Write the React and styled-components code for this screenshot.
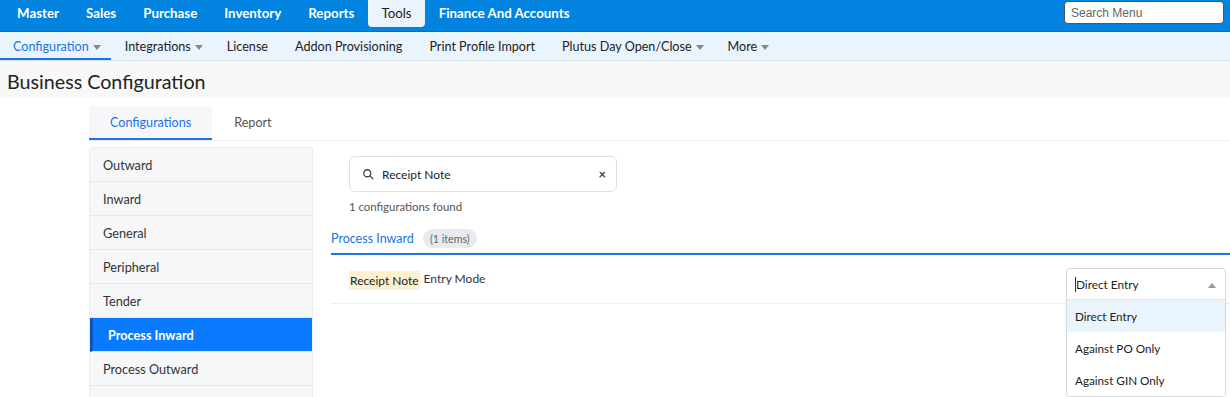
import React from "react";
import styled, { createGlobalStyle } from "styled-components";

const GlobalStyle = createGlobalStyle`
  body {
    margin: 0;
    font-family: Lato, "Open Sans", sans-serif;
    background: #fff;
    color: #333;
  }
`;

const TopBar = styled.div`
  display: flex;
  align-items: flex-start;
  height: 31px;
  background: #0283e0;
  padding-left: 3.5px;
  border-bottom: 1px solid #0b6fc4;
`;

const TopItem = styled.div`
  font-size: 13.3px;
  height: 27px;
  line-height: 26px;
  padding: 0 13.5px;
  color: ${(p) => (p.active ? "#222" : "#fff")};
  background: ${(p) => (p.active ? "#eaf4fd" : "transparent")};
  border-radius: 0 0 4px 4px;
  font-weight: ${(p) => (p.active ? 400 : 700)};
`;

const SearchMenu = styled.input`
  margin-left: auto;
  margin-right: 6px;
  margin-top: 1px;
  width: 160px;
  height: 23px;
  box-sizing: border-box;
  border: 1px solid #555;
  border-radius: 4px;
  padding: 0 6px;
  font-family: "Liberation Sans", Arial, sans-serif;
  font-size: 12px;
  color: #333;
  &::placeholder {
    color: #666;
  }
`;

const SubNav = styled.div`
  display: flex;
  height: 28px;
  background: #eaf4fd;
  border-bottom: 1px solid #d6e2ec;
`;

const SubItem = styled.div`
  display: flex;
  align-items: center;
  gap: 4px;
  font-size: 12.6px;
  padding: 2px 13.5px 0 13.5px;
  color: ${(p) => (p.active ? "#1a73e8" : "#222")};
  border-bottom: 2px solid ${(p) => (p.active ? "#1a73e8" : "transparent")};
  &:first-child {
    padding-left: 13px;
  }
`;

const Caret = styled.span`
  width: 0;
  height: 0;
  border-left: 4.5px solid transparent;
  border-right: 4.5px solid transparent;
  border-top: 5px solid ${(p) => (p.up ? "#999" : "#888")};
  margin-top: 2px;
  margin-right: ${(p) => (p.up ? "0" : "-3px")};
  transform: ${(p) => (p.up ? "rotate(180deg)" : "none")};
`;

const Header = styled.div`
  background: #f8f8f8;
  height: 37px;
  padding: 3px 0 0 7px;
  box-sizing: border-box;
  display: flex;
  align-items: center;
  font-size: 19.7px;
  color: #222;
`;

const Body = styled.div`
  padding-left: 89px;
  padding-top: 8px;
`;

const Tabs = styled.div`
  display: flex;
  border-bottom: 1px solid #eee;
  height: 35px;
  box-sizing: border-box;
`;

const Tab = styled.div`
  display: flex;
  align-items: center;
  padding: 0 21px;
  font-size: 12.6px;
  color: ${(p) => (p.active ? "#1a73e8" : "#555")};
  background: ${(p) => (p.active ? "#f5f7f9" : "transparent")};
  border-bottom: 2px solid ${(p) => (p.active ? "#1a73e8" : "transparent")};
  &:last-child {
    padding-left: 22px;
  }
`;

const Split = styled.div`
  display: flex;
  margin-top: 6px;
`;

const Side = styled.div`
  width: 222px;
  background: #f6f7f9;
  border: 1px solid #ececec;
  border-bottom: none;
  border-radius: 6px 0 0 0;
  flex-shrink: 0;
`;

const SideItem = styled.div`
  height: 33px;
  display: flex;
  align-items: center;
  padding-left: ${(p) => (p.active ? "15px" : "13px")};
  font-size: 12.7px;
  font-weight: ${(p) => (p.active ? 700 : 400)};
  color: ${(p) => (p.active ? "#fff" : "#333")};
  background: ${(p) => (p.active ? "#0a7aff" : "transparent")};
  border-left: ${(p) => (p.active ? "3px solid #0656c4" : "none")};
  border-bottom: 1px solid #e8e8e8;
`;

const Main = styled.div`
  flex: 1;
  padding-left: 18px;
`;

const SearchBox = styled.div`
  margin: 9px 0 0 18px;
  width: 268px;
  height: 36px;
  box-sizing: border-box;
  border: 1px solid #dcdfe3;
  border-radius: 6px;
  display: flex;
  align-items: center;
  padding: 0 10px 0 12px;
  gap: 8px;
  font-size: 12px;
  color: #222;
`;

const Clear = styled.span`
  margin-left: auto;
  font-size: 13px;
  font-weight: 700;
  color: #444;
`;

const Found = styled.div`
  margin: 8px 0 0 18px;
  font-size: 11.4px;
  color: #555;
`;

const GroupHead = styled.div`
  margin-top: 16px;
  display: flex;
  align-items: center;
  gap: 9px;
  padding-bottom: 5px;
  border-bottom: 2px solid #1a73e8;
  font-size: 12.5px;
  color: #1a73e8;
`;

const Badge = styled.span`
  background: #e8eaed;
  color: #666;
  font-size: 10.7px;
  border-radius: 10px;
  padding: 3px 7px;
`;

const ConfigRow = styled.div`
  position: relative;
  height: 49px;
  border-bottom: 1px solid #eee;
  display: flex;
  align-items: flex-start;
  padding: 16px 0 0 18px;
  box-sizing: border-box;
  font-size: 12px;
  color: #333;
`;

const Mark = styled.span`
  background: #fdf1d0;
  color: #222;
  padding: 2px 1px;
  margin-right: 4px;
`;

const Select = styled.div`
  position: absolute;
  right: 4px;
  top: 13px;
  width: 158px;
  background: #fff;
  border: 1px solid #d6d9dd;
  border-radius: 4px;
  box-shadow: 0 2px 4px rgba(0, 0, 0, 0.06);
  overflow: hidden;
`;

const SelectValue = styled.div`
  height: 30px;
  display: flex;
  align-items: center;
  justify-content: space-between;
  padding: 0 9px 0 8px;
  font-size: 11.8px;
  color: #222;
  border-bottom: 1px solid #e6e6e6;
  span:first-child {
    border-left: 1px solid #333;
  }
`;

const Option = styled.div`
  height: 32px;
  display: flex;
  align-items: center;
  padding-left: 8px;
  font-size: 11.7px;
  color: #222;
  background: ${(p) => (p.selected ? "#eaf4fd" : "#fff")};
`;

const SearchIcon = () => (
  <svg width="12" height="12" viewBox="0 0 24 24" fill="none" stroke="#444" strokeWidth="2.6" strokeLinecap="round">
    <circle cx="10.5" cy="10.5" r="7" />
    <line x1="16" y1="16" x2="21.5" y2="21.5" />
  </svg>
);

const topItems = ["Master", "Sales", "Purchase", "Inventory", "Reports", "Tools", "Finance And Accounts"];
const subItems = [
  { label: "Configuration", caret: true, active: true },
  { label: "Integrations", caret: true },
  { label: "License" },
  { label: "Addon Provisioning" },
  { label: "Print Profile Import" },
  { label: "Plutus Day Open/Close", caret: true },
  { label: "More", caret: true },
];
const sideItems = ["Outward", "Inward", "General", "Peripheral", "Tender", "Process Inward", "Process Outward", ""];

export default function App() {
  return (
    <>
      <GlobalStyle />
      <TopBar>
        {topItems.map((t) => (
          <TopItem key={t} active={t === "Tools"}>
            {t}
          </TopItem>
        ))}
        <SearchMenu placeholder="Search Menu" />
      </TopBar>
      <SubNav>
        {subItems.map((s) => (
          <SubItem key={s.label} active={s.active}>
            {s.label}
            {s.caret && <Caret />}
          </SubItem>
        ))}
      </SubNav>
      <Header>Business Configuration</Header>
      <Body>
        <Tabs>
          <Tab active>Configurations</Tab>
          <Tab>Report</Tab>
        </Tabs>
        <Split>
          <Side>
            {sideItems.map((s, i) => (
              <SideItem key={i} active={s === "Process Inward"}>
                {s}
              </SideItem>
            ))}
          </Side>
          <Main>
            <SearchBox>
              <SearchIcon />
              Receipt Note
              <Clear>×</Clear>
            </SearchBox>
            <Found>1 configurations found</Found>
            <GroupHead>
              Process Inward
              <Badge>(1 items)</Badge>
            </GroupHead>
            <ConfigRow>
              <Mark>Receipt Note</Mark>
              Entry Mode
              <Select>
                <SelectValue>
                  <span>Direct Entry</span>
                  <Caret up />
                </SelectValue>
                <Option selected>Direct Entry</Option>
                <Option>Against PO Only</Option>
                <Option>Against GIN Only</Option>
              </Select>
            </ConfigRow>
          </Main>
        </Split>
      </Body>
    </>
  );
}
